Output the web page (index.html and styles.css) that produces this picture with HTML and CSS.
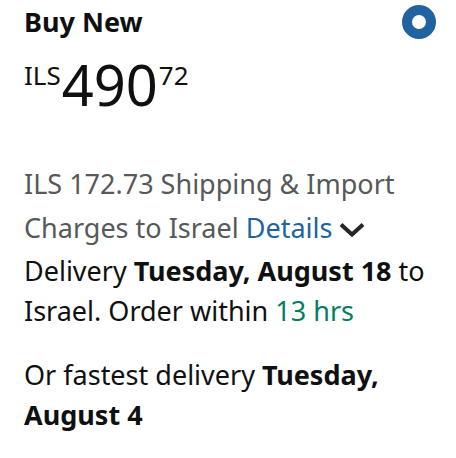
FILE: index.html
```
<!DOCTYPE html>
<html lang="en">
<head>
  <meta charset="UTF-8" />
  <meta name="viewport" content="width=device-width, initial-scale=1.0" />
  <title>Buy New</title>
  <link rel="stylesheet" href="styles.css">
</head>
<body>
  <main class="buy-box">
    <div class="buy-header">
      <label class="buy-title" for="buyNew">Buy New</label>
      <input class="buy-radio" id="buyNew" type="radio" name="offer" checked />
    </div>

    <div class="price">
      <span class="price-small">ILS</span><span class="price-whole">490</span><span class="price-small">72</span>
    </div>

    <p class="shipping">
      ILS 172.73 Shipping &amp; Import Charges to Israel
      <a class="details" href="#details">Details
        <svg class="chevron" viewBox="0 0 26 16" aria-hidden="true">
          <path d="M2 2.5 L13 12.5 L24 2.5" fill="none" stroke="#232526" stroke-width="4" />
        </svg></a>
    </p>

    <p class="delivery">Delivery <b>Tuesday, August 18</b> to Israel. Order within <span class="countdown">13 hrs</span></p>
    <p class="delivery">Or fastest delivery <b>Tuesday, August 4</b></p>
  </main>
</body>
</html>
```
FILE: styles.css
```
body {
  margin: 0;
  font-family: 'Noto Sans', sans-serif;
  font-size: 27px;
  line-height: 40px;
  background: #fff;
  color: #0f1111;
}
.buy-box {
  padding: 2px 20px 20px 24px;
}
.buy-header {
  display: flex;
  justify-content: space-between;
  align-items: center;
}
.buy-title {
  font-weight: 700;
}
.buy-radio {
  appearance: none;
  box-sizing: border-box;
  width: 34px;
  height: 34px;
  margin: 0;
  border: 10px solid #2162a1;
  border-radius: 50%;
  background: #fff;
}
.price {
  display: flex;
  align-items: flex-start;
  gap: 1px;
  margin-top: 12px;
}
.price-small {
  font-size: 26px;
  line-height: 42px;
}
.price-whole {
  font-size: 56px;
  line-height: 60px;
}
p {
  margin: 0;
}
.shipping {
  margin-top: 48px;
  line-height: 44px;
  color: #565959;
}
.details {
  color: #2162a1;
  text-decoration: none;
}
.chevron {
  width: 26px;
  height: 16px;
}
.delivery {
  margin-top: 1px;
  margin-bottom: 24px;
}
.countdown {
  color: #067d62;
}
```
